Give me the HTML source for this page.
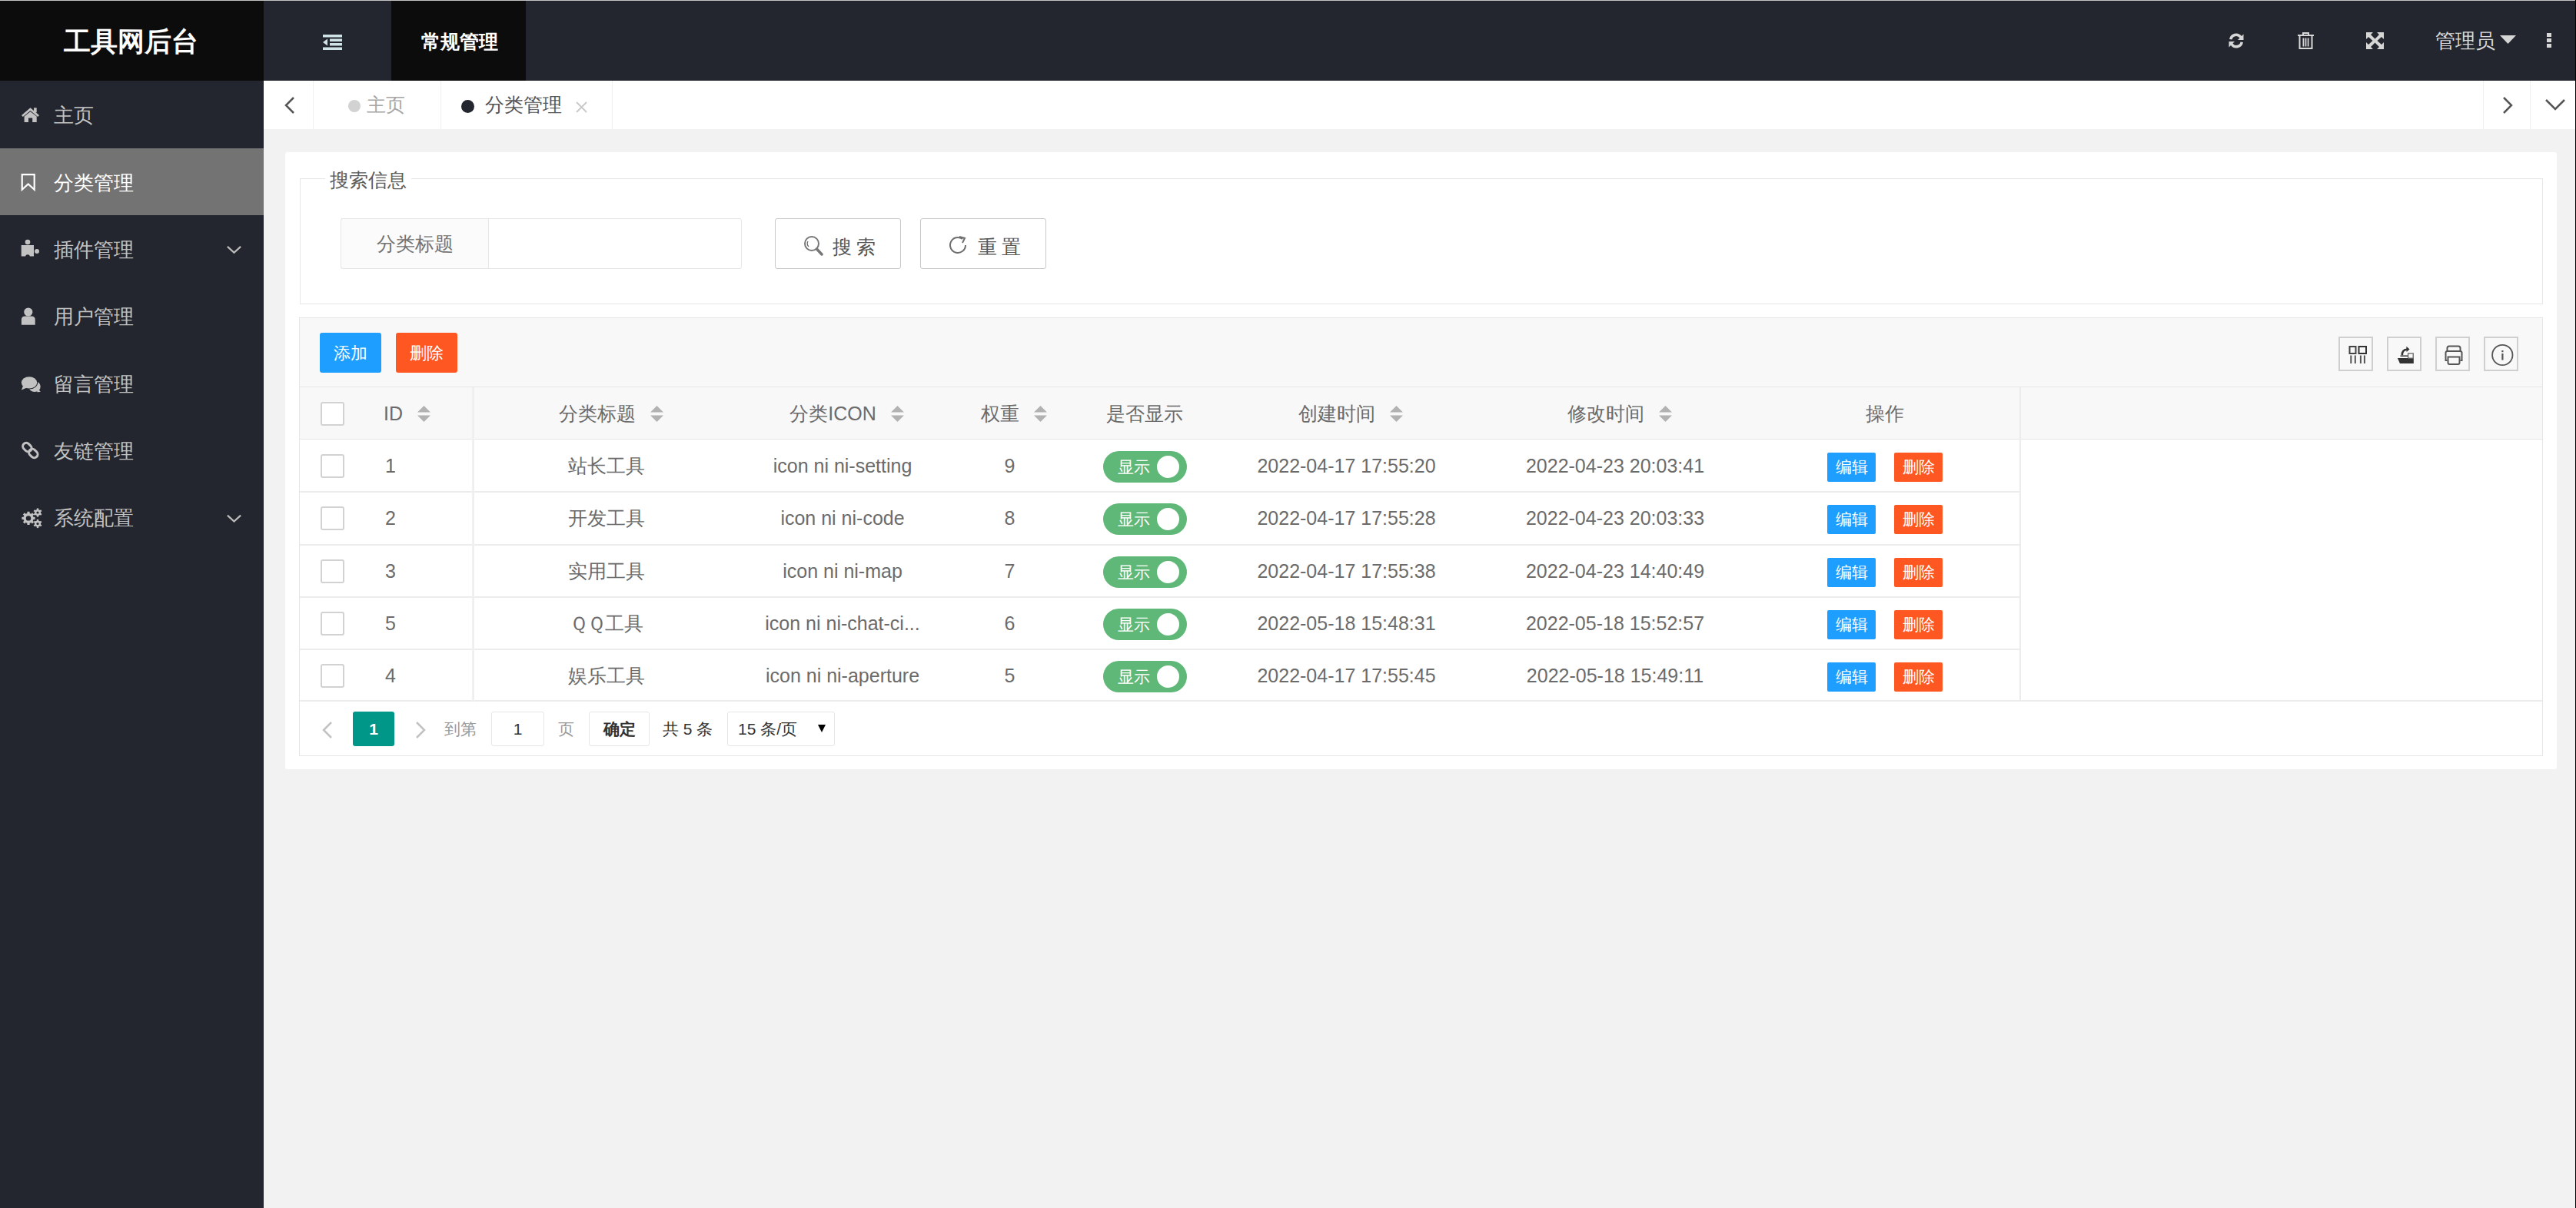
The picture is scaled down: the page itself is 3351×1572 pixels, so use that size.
<!DOCTYPE html>
<html><head><meta charset="utf-8">
<style>
*{margin:0;padding:0;box-sizing:border-box}
html,body{width:3351px;height:1572px;overflow:hidden;background:#f2f2f2;font-family:"Liberation Sans",sans-serif;color:#666}
.a{position:absolute}
svg{display:block}
/* header */
#topline{left:0;top:0;width:3351px;height:1px;background:#c4c4c4;z-index:5}
#logo{left:0;top:0;width:343px;height:105px;background:#0c0c0c;color:#fff;font-weight:bold;font-size:35px;line-height:108px;text-align:center;padding-right:3px}
#hdr{left:343px;top:0;width:3008px;height:105px;background:#23262e}
#rline{left:3350px;top:0;width:1px;height:1572px;background:#000;z-index:6}
.hact{left:509px;top:0;width:175px;height:105px;background:#0c0c0c;color:#fff;font-weight:bold;font-size:25px;line-height:109px;text-align:center;padding-left:3px}
.hw{color:#e6e6e6}
/* sidebar */
#side{left:0;top:105px;width:343px;height:1467px;background:#23262e}
.mi{left:0;width:343px;height:87px;color:#c2c2c2;font-size:26px;line-height:87px}
.mi .t{position:absolute;left:70px;top:2px}
.mi .ic{position:absolute;left:26px;top:33px}
.mi .ch{position:absolute;left:294px;top:38px}
.mi.on{background:#737373;color:#fff}
/* tabs */
#tabs{left:343px;top:105px;width:3008px;height:63px;background:#fff}
.vd{position:absolute;top:0;width:1px;height:63px;background:#f0f0f0}
.tt{position:absolute;top:0;height:63px;line-height:63px;font-size:25px}
/* card */
#card{left:371px;top:198px;width:2955px;height:803px;background:#fff;border-radius:3px}
#fs{left:390px;top:232px;width:2918px;height:164px;border:1px solid #e6e6e6}
#legend{left:423px;top:219px;padding:0 6px;background:#fff;font-size:25px;line-height:30px;color:#5c5c5c}
.lbl{left:443px;top:284px;width:193px;height:66px;background:#fbfbfb;border:1px solid #e6e6e6;border-right:none;border-radius:3px 0 0 3px;font-size:25px;line-height:64px;text-align:center;color:#737373}
.inp{left:635px;top:284px;width:330px;height:66px;border:1px solid #e6e6e6;border-radius:0 3px 3px 0}
.btn{top:284px;width:164px;height:66px;border:1px solid #c9c9c9;border-radius:3px;color:#555;font-size:25px;line-height:64px}
/* table */
#tv{left:389px;top:413px;width:2919px;height:571px;border:1px solid #e6e6e6}
#tool{left:390px;top:414px;width:2917px;height:90px;background:#f8f8f8;border-bottom:1px solid #e6e6e6}
.tb{top:433px;height:52px;width:80px;border-radius:3px;color:#fff;font-size:22px;line-height:54px;text-align:center}
.ib{top:438px;width:45px;height:45px;border:2px solid #cfcfcf}
#thead{left:390px;top:504px;width:2917px;height:68px;background:#f8f8f8;border-bottom:1px solid #e6e6e6}
.row{left:390px;width:2238px;height:69px;border-bottom:1px solid #e6e6e6}
.cell{position:absolute;top:0;height:68px;line-height:68px;font-size:25px;color:#666;text-align:center;white-space:nowrap}
.cb{position:absolute;left:27px;width:31px;height:31px;border:2px solid #d2d2d2;border-radius:3px;background:#fff}
.sw{position:absolute;width:109px;height:41px;border-radius:21px;background:#5FB878;color:#fff;font-size:21px;line-height:41px}
.sw i{position:absolute;right:10px;top:6px;width:29px;height:29px;border-radius:50%;background:#fff}
.sw span{position:absolute;left:19px;top:0}
.eb{position:absolute;width:63px;height:38px;border-radius:2px;color:#fff;font-size:21px;line-height:38px;text-align:center}
.sort{display:inline-block;vertical-align:middle;margin-left:18px;width:17px;height:30px;position:relative;top:-2px}

.th{height:68px;line-height:68px;font-size:25px;color:#6b6b6b;white-space:nowrap}
.td{height:68px;line-height:68px;font-size:25px;color:#6b6b6b;white-space:nowrap}
.srt{display:inline-block;width:25px;height:21px;position:relative;vertical-align:middle;top:-2px}
.srt svg{position:absolute;left:19px;top:0}
.hl{left:390px;width:2917px;height:2px;background:#ececec}
.vl{width:2px;background:#ececec}
/* pager */
.pg{top:926px;height:45px;line-height:45px;font-size:21px;color:#666}
</style></head><body>
<div class="a" id="topline"></div>
<div class="a" id="rline"></div>
<!-- header -->
<div class="a" id="logo">工具网后台</div>
<div class="a" id="hdr"></div>
<div class="a" style="left:420px;top:45px">
<svg width="25" height="20" viewBox="0 0 25 20"><rect x="0" y="0" width="25" height="3.5" fill="#cfe3e6"/><rect x="9" y="5.5" width="16" height="3.5" fill="#cfe3e6"/><rect x="9" y="11" width="16" height="3.5" fill="#cfe3e6"/><rect x="0" y="16.5" width="25" height="3.5" fill="#cfe3e6"/><path d="M6 5.5 L0 10 L6 14.5Z" fill="#cfe3e6"/></svg>
</div>
<div class="a hact">常规管理</div>
<!-- right header icons -->
<div class="a" style="left:2897px;top:42px">
<svg width="24" height="22" viewBox="0 0 24 22"><path d="M3 9 A9 9 0 0 1 19 5 L21.5 2.5 V10 H14 L16.5 7.5 A5.5 5.5 0 0 0 6.5 9.5Z" fill="#d6d6d6"/><path d="M21 13 A9 9 0 0 1 5 17 L2.5 19.5 V12 H10 L7.5 14.5 A5.5 5.5 0 0 0 17.5 12.5Z" fill="#d6d6d6"/></svg>
</div>
<div class="a" style="left:2989px;top:42px">
<svg width="21" height="22" viewBox="0 0 21 22"><path d="M7 3 V1 H14 V3" fill="none" stroke="#d6d6d6" stroke-width="2"/><rect x="0" y="3" width="21" height="2" fill="#d6d6d6"/><path d="M2.5 5 V21 H18.5 V5" fill="none" stroke="#d6d6d6" stroke-width="2"/><rect x="6.5" y="7.5" width="1.8" height="11" fill="#d6d6d6"/><rect x="9.6" y="7.5" width="1.8" height="11" fill="#d6d6d6"/><rect x="12.7" y="7.5" width="1.8" height="11" fill="#d6d6d6"/></svg>
</div>
<div class="a" style="left:3078px;top:42px">
<svg width="23" height="22" viewBox="0 0 23 22"><path d="M0 0 H9 L6 3 L11.5 8.5 L17 3 L14 0 H23 V9 L20 6 L14.5 11 L20 16 L23 13 V22 H14 L17 19 L11.5 13.5 L6 19 L9 22 H0 V13 L3 16 L8.5 11 L3 6 L0 9Z" fill="#d6d6d6"/></svg>
</div>
<div class="a hw" style="left:3168px;top:38px;font-size:26px;line-height:30px;color:#d9d9d9">管理员</div>
<div class="a" style="left:3252px;top:46px"><svg width="21" height="11" viewBox="0 0 21 11"><path d="M0 0 H21 L10.5 11Z" fill="#d6d6d6"/></svg></div>
<div class="a" style="left:3313px;top:43px"><svg width="6" height="19" viewBox="0 0 6 19"><rect x="0" y="0" width="6" height="5" fill="#d6d6d6"/><rect x="0" y="7" width="6" height="5" fill="#d6d6d6"/><rect x="0" y="14" width="6" height="5" fill="#d6d6d6"/></svg></div>

<!-- sidebar -->
<div class="a" id="side"></div>
<div class="a mi" style="top:105px"><span class="t">主页</span></div>
<div class="a mi on" style="top:193px"><span class="t">分类管理</span></div>
<div class="a mi" style="top:280px"><span class="t">插件管理</span></div>
<div class="a mi" style="top:367px"><span class="t">用户管理</span></div>
<div class="a mi" style="top:455px"><span class="t">留言管理</span></div>
<div class="a mi" style="top:542px"><span class="t">友链管理</span></div>
<div class="a mi" style="top:629px"><span class="t">系统配置</span></div>

<svg class="a" style="left:0;top:0;z-index:3" width="343" height="720" viewBox="0 0 343 720">
<path d="M28 150 L39.5 140.3 L51 150 L49.2 152 L39.5 144 L29.8 152Z" fill="#c2c2c2"/>
<rect x="44" y="140.3" width="3.7" height="6" fill="#c2c2c2"/>
<path d="M31.6 159 V151.5 L39.5 145.3 L47.7 151.5 V159 H42.2 V153.5 H37 V159Z" fill="#c2c2c2"/>
<path d="M28.7 227.1 H44.7 V246.7 L36.7 239.5 L28.7 246.7Z" fill="none" stroke="#fff" stroke-width="2.2" stroke-linejoin="miter"/>
<rect x="27.7" y="319" width="16.3" height="14.5" fill="#c2c2c2"/>
<circle cx="36" cy="315" r="3.3" fill="#c2c2c2"/>
<circle cx="48" cy="327" r="3" fill="#c2c2c2"/>
<circle cx="36" cy="334" r="2.8" fill="#23262e"/>
<circle cx="36.8" cy="406" r="5.6" fill="#c2c2c2"/>
<path d="M27.9 422.7 V416 Q27.9 411.5 32.4 411.5 H41.2 Q45.7 411.5 45.7 416 V422.7Z" fill="#c2c2c2"/>
<ellipse cx="45" cy="503" rx="7.7" ry="7" fill="#c2c2c2"/>
<path d="M48 510.2 L52.7 510 L50 506Z" fill="#c2c2c2"/>
<ellipse cx="38" cy="497.8" rx="11.2" ry="8.6" fill="#23262e"/>
<ellipse cx="38" cy="497.8" rx="10.2" ry="7.6" fill="#c2c2c2"/>
<path d="M30 502 L27.9 507.5 L35 504.5Z" fill="#c2c2c2"/>
<g transform="rotate(45 39.3 586)"><rect x="27.5" y="581.5" width="12.5" height="9" rx="4.5" fill="none" stroke="#c2c2c2" stroke-width="3"/><rect x="38.7" y="581.5" width="12.5" height="9" rx="4.5" fill="none" stroke="#c2c2c2" stroke-width="3"/></g>
<circle cx="37" cy="674.4" r="6.6" fill="#c2c2c2"/><rect x="35.4" y="665.8" width="3.2" height="17.2" fill="#c2c2c2" transform="rotate(0.0 37 674.4)"/><rect x="35.4" y="665.8" width="3.2" height="17.2" fill="#c2c2c2" transform="rotate(45.0 37 674.4)"/><rect x="35.4" y="665.8" width="3.2" height="17.2" fill="#c2c2c2" transform="rotate(90.0 37 674.4)"/><rect x="35.4" y="665.8" width="3.2" height="17.2" fill="#c2c2c2" transform="rotate(135.0 37 674.4)"/><circle cx="37" cy="674.4" r="3.2" fill="#23262e"/>
<circle cx="49" cy="667" r="4.0" fill="#c2c2c2"/><rect x="47.8" y="661.4" width="2.4" height="11.2" fill="#c2c2c2" transform="rotate(0.0 49 667)"/><rect x="47.8" y="661.4" width="2.4" height="11.2" fill="#c2c2c2" transform="rotate(60.0 49 667)"/><rect x="47.8" y="661.4" width="2.4" height="11.2" fill="#c2c2c2" transform="rotate(120.0 49 667)"/><circle cx="49" cy="667" r="1.6" fill="#23262e"/>
<circle cx="49" cy="681.5" r="4.0" fill="#c2c2c2"/><rect x="47.8" y="675.9" width="2.4" height="11.2" fill="#c2c2c2" transform="rotate(0.0 49 681.5)"/><rect x="47.8" y="675.9" width="2.4" height="11.2" fill="#c2c2c2" transform="rotate(60.0 49 681.5)"/><rect x="47.8" y="675.9" width="2.4" height="11.2" fill="#c2c2c2" transform="rotate(120.0 49 681.5)"/><circle cx="49" cy="681.5" r="1.6" fill="#23262e"/>
<path d="M295.9 320.9 L304.5 328.8 L313.1 320.9" fill="none" stroke="#bdbdbd" stroke-width="2.2"/>
<path d="M295.9 670.6 L304.5 678.5 L313.1 670.6" fill="none" stroke="#bdbdbd" stroke-width="2.2"/>
</svg>
<!-- tabs -->
<div class="a" id="tabs">
 <div class="vd" style="left:64px"></div>
 <div class="vd" style="left:230px"></div>
 <div class="vd" style="left:453px"></div>
 <div class="vd" style="left:2887px"></div>
 <div class="vd" style="left:2948px"></div>
 <div class="a" style="left:27px;top:21px"><svg width="14" height="22" viewBox="0 0 14 22"><path d="M12 1 L2 11 L12 21" fill="none" stroke="#555" stroke-width="2.5"/></svg></div>
 <div class="a" style="left:110px;top:25px;width:16px;height:16px;border-radius:50%;background:#d2d2d2"></div>
 <div class="tt" style="left:134px;color:#a6a6a6">主页</div>
 <div class="a" style="left:257px;top:25px;width:17px;height:17px;border-radius:50%;background:#23262e"></div>
 <div class="tt" style="left:288px;color:#555">分类管理</div>
 <div class="a" style="left:406px;top:27px"><svg width="15" height="15" viewBox="0 0 15 15"><path d="M1 1 L14 14 M14 1 L1 14" stroke="#c8c8c8" stroke-width="1.8"/></svg></div>
 <div class="a" style="left:2912px;top:21px"><svg width="14" height="22" viewBox="0 0 14 22"><path d="M2 1 L12 11 L2 21" fill="none" stroke="#555" stroke-width="2.5"/></svg></div>
 <div class="a" style="left:2968px;top:24px"><svg width="26" height="15" viewBox="0 0 26 15"><path d="M1 1 L13 13 L25 1" fill="none" stroke="#555" stroke-width="2.5"/></svg></div>
</div>

<!-- card -->
<div class="a" id="card"></div>
<div class="a" id="fs"></div>
<div class="a" id="legend">搜索信息</div>
<div class="a lbl">分类标题</div>
<div class="a inp"></div>
<div class="a btn" style="left:1008px"><span class="a" style="left:36px;top:21px"><svg width="26" height="28" viewBox="0 0 26 28"><circle cx="11" cy="11" r="9" fill="none" stroke="#777" stroke-width="2"/><path d="M17.5 18 L24 25" stroke="#777" stroke-width="3.5" stroke-linecap="round"/><path d="M6 8 A6 6 0 0 0 7 15" fill="none" stroke="#666" stroke-width="1.2"/></svg></span><span class="a" style="left:74px;top:4px;letter-spacing:6px">搜索</span></div>
<div class="a btn" style="left:1197px"><span class="a" style="left:36px;top:20px"><svg width="26" height="28" viewBox="0 0 26 28"><path d="M22 14 A10 10 0 1 1 18 6" fill="none" stroke="#6e6e6e" stroke-width="2"/><path d="M14 3 L21 5 L18 11" fill="none" stroke="#6e6e6e" stroke-width="2"/></svg></span><span class="a" style="left:74px;top:4px;letter-spacing:6px">重置</span></div>

<!-- table -->
<div class="a" id="tv"></div>
<div class="a" id="tool"></div>
<div class="a tb" style="left:416px;background:#1E9FFF">添加</div>
<div class="a tb" style="left:515px;background:#FF5722">删除</div>
<div class="a ib" style="left:3042px"></div>
<div class="a ib" style="left:3105px"></div>
<div class="a ib" style="left:3168px"></div>
<div class="a ib" style="left:3231px"></div>
<div class="a" id="thead"></div>
<div class="a" style="left:3042px;top:438px"><svg width="45" height="45" viewBox="0 0 45 45"><rect x="14.5" y="13" width="8" height="9" fill="none" stroke="#444" stroke-width="2"/><rect x="26.5" y="13" width="9.5" height="9" fill="none" stroke="#333" stroke-width="2"/><rect x="15.3" y="24.5" width="2" height="10.5" fill="#555"/><rect x="20.8" y="24.5" width="2" height="10.5" fill="#555"/><rect x="27.9" y="24.5" width="2" height="10.5" fill="#555"/><rect x="32.9" y="24.5" width="2" height="10.5" fill="#555"/></svg></div>
<div class="a" style="left:3105px;top:438px"><svg width="45" height="45" viewBox="0 0 45 45"><path d="M13.9 28 H34.8 V35.1 H16.9Z" fill="#333"/><rect x="17.5" y="24.4" width="10.5" height="1.6" fill="#444"/><rect x="27.6" y="21.9" width="6.6" height="6.3" fill="none" stroke="#666" stroke-width="1.3"/><path d="M19.8 24.3 Q19.5 17.5 26 16.8" fill="none" stroke="#333" stroke-width="2.6"/><path d="M25.3 12.8 L29.6 16.6 L25.6 20Z" fill="#333"/></svg></div>
<div class="a" style="left:3168px;top:438px"><svg width="45" height="45" viewBox="0 0 45 45"><path d="M15.5 19 V15 Q15.5 12.5 18 12.5 H30 Q32.5 12.5 32.5 15 V19" fill="none" stroke="#555" stroke-width="2"/><path d="M15.5 31 H13.5 V21 Q13.5 19 16 19 H32 Q34.5 19 34.5 21 V31 H32.5" fill="none" stroke="#555" stroke-width="2"/><path d="M16.5 26.5 H31.5 V34 Q31.5 36 29.5 36 H18.5 Q16.5 36 16.5 34Z" fill="none" stroke="#555" stroke-width="2"/></svg></div>
<div class="a" style="left:3231px;top:438px"><svg width="45" height="45" viewBox="0 0 45 45"><circle cx="24.3" cy="24" r="13.2" fill="none" stroke="#555" stroke-width="1.8"/><rect x="23.3" y="18" width="2.2" height="2.2" fill="#555"/><rect x="23.3" y="22" width="2.2" height="8.5" fill="#555"/></svg></div>

<div class="a cb" style="left:417px;top:523px"></div>
<div class="a th" style="left:499px;top:504px">ID<span class="srt"><svg width="17" height="21" viewBox="0 0 17 21"><path d="M8.5 0 L17 8.5 H0Z M0 12.5 H17 L8.5 21Z" fill="#b2b2b2"/></svg></span></div>
<div class="a th" style="left:614px;top:504px;width:350px;text-align:center">分类标题<span class="srt"><svg width="17" height="21" viewBox="0 0 17 21"><path d="M8.5 0 L17 8.5 H0Z M0 12.5 H17 L8.5 21Z" fill="#b2b2b2"/></svg></span></div>
<div class="a th" style="left:964px;top:504px;width:264px;text-align:center">分类ICON<span class="srt"><svg width="17" height="21" viewBox="0 0 17 21"><path d="M8.5 0 L17 8.5 H0Z M0 12.5 H17 L8.5 21Z" fill="#b2b2b2"/></svg></span></div>
<div class="a th" style="left:1228px;top:504px;width:171px;text-align:center">权重<span class="srt"><svg width="17" height="21" viewBox="0 0 17 21"><path d="M8.5 0 L17 8.5 H0Z M0 12.5 H17 L8.5 21Z" fill="#b2b2b2"/></svg></span></div>
<div class="a th" style="left:1401px;top:504px;width:176px;text-align:center">是否显示</div>
<div class="a th" style="left:1577px;top:504px;width:349px;text-align:center">创建时间<span class="srt"><svg width="17" height="21" viewBox="0 0 17 21"><path d="M8.5 0 L17 8.5 H0Z M0 12.5 H17 L8.5 21Z" fill="#b2b2b2"/></svg></span></div>
<div class="a th" style="left:1926px;top:504px;width:350px;text-align:center">修改时间<span class="srt"><svg width="17" height="21" viewBox="0 0 17 21"><path d="M8.5 0 L17 8.5 H0Z M0 12.5 H17 L8.5 21Z" fill="#b2b2b2"/></svg></span></div>
<div class="a th" style="left:2276px;top:504px;width:352px;text-align:center">操作</div>
<div class="a cb" style="left:417px;top:591px"></div>
<div class="a td" style="left:501px;top:572px">1</div>
<div class="a td" style="left:614px;top:572px;width:350px;text-align:center">站长工具</div>
<div class="a td" style="left:964px;top:572px;width:264px;text-align:center">icon ni ni-setting</div>
<div class="a td" style="left:1228px;top:572px;width:171px;text-align:center">9</div>
<div class="a sw" style="left:1435px;top:587px"><span>显示</span><i></i></div>
<div class="a td" style="left:1577px;top:572px;width:349px;text-align:center">2022-04-17 17:55:20</div>
<div class="a td" style="left:1926px;top:572px;width:350px;text-align:center">2022-04-23 20:03:41</div>
<div class="a eb" style="left:2377px;top:589px;background:#1E9FFF">编辑</div>
<div class="a eb" style="left:2464px;top:589px;background:#FF5722">删除</div>
<div class="a cb" style="left:417px;top:659px"></div>
<div class="a td" style="left:501px;top:640px">2</div>
<div class="a td" style="left:614px;top:640px;width:350px;text-align:center">开发工具</div>
<div class="a td" style="left:964px;top:640px;width:264px;text-align:center">icon ni ni-code</div>
<div class="a td" style="left:1228px;top:640px;width:171px;text-align:center">8</div>
<div class="a sw" style="left:1435px;top:655px"><span>显示</span><i></i></div>
<div class="a td" style="left:1577px;top:640px;width:349px;text-align:center">2022-04-17 17:55:28</div>
<div class="a td" style="left:1926px;top:640px;width:350px;text-align:center">2022-04-23 20:03:33</div>
<div class="a eb" style="left:2377px;top:657px;background:#1E9FFF">编辑</div>
<div class="a eb" style="left:2464px;top:657px;background:#FF5722">删除</div>
<div class="a cb" style="left:417px;top:728px"></div>
<div class="a td" style="left:501px;top:709px">3</div>
<div class="a td" style="left:614px;top:709px;width:350px;text-align:center">实用工具</div>
<div class="a td" style="left:964px;top:709px;width:264px;text-align:center">icon ni ni-map</div>
<div class="a td" style="left:1228px;top:709px;width:171px;text-align:center">7</div>
<div class="a sw" style="left:1435px;top:724px"><span>显示</span><i></i></div>
<div class="a td" style="left:1577px;top:709px;width:349px;text-align:center">2022-04-17 17:55:38</div>
<div class="a td" style="left:1926px;top:709px;width:350px;text-align:center">2022-04-23 14:40:49</div>
<div class="a eb" style="left:2377px;top:726px;background:#1E9FFF">编辑</div>
<div class="a eb" style="left:2464px;top:726px;background:#FF5722">删除</div>
<div class="a cb" style="left:417px;top:796px"></div>
<div class="a td" style="left:501px;top:777px">5</div>
<div class="a td" style="left:614px;top:777px;width:350px;text-align:center">ＱＱ工具</div>
<div class="a td" style="left:964px;top:777px;width:264px;text-align:center">icon ni ni-chat-ci...</div>
<div class="a td" style="left:1228px;top:777px;width:171px;text-align:center">6</div>
<div class="a sw" style="left:1435px;top:792px"><span>显示</span><i></i></div>
<div class="a td" style="left:1577px;top:777px;width:349px;text-align:center">2022-05-18 15:48:31</div>
<div class="a td" style="left:1926px;top:777px;width:350px;text-align:center">2022-05-18 15:52:57</div>
<div class="a eb" style="left:2377px;top:794px;background:#1E9FFF">编辑</div>
<div class="a eb" style="left:2464px;top:794px;background:#FF5722">删除</div>
<div class="a cb" style="left:417px;top:864px"></div>
<div class="a td" style="left:501px;top:845px">4</div>
<div class="a td" style="left:614px;top:845px;width:350px;text-align:center">娱乐工具</div>
<div class="a td" style="left:964px;top:845px;width:264px;text-align:center">icon ni ni-aperture</div>
<div class="a td" style="left:1228px;top:845px;width:171px;text-align:center">5</div>
<div class="a sw" style="left:1435px;top:860px"><span>显示</span><i></i></div>
<div class="a td" style="left:1577px;top:845px;width:349px;text-align:center">2022-04-17 17:55:45</div>
<div class="a td" style="left:1926px;top:845px;width:350px;text-align:center">2022-05-18 15:49:11</div>
<div class="a eb" style="left:2377px;top:862px;background:#1E9FFF">编辑</div>
<div class="a eb" style="left:2464px;top:862px;background:#FF5722">删除</div>
<div class="a hl" style="top:639px;width:2238px"></div>
<div class="a hl" style="top:708px;width:2238px"></div>
<div class="a hl" style="top:776px;width:2238px"></div>
<div class="a hl" style="top:844px;width:2238px"></div>
<div class="a hl" style="top:911px"></div>

<div class="a vl" style="left:2627px;top:504px;height:409px"></div>
<div class="a" style="left:614px;top:504px;width:3px;height:409px;background:linear-gradient(90deg,#f4f4f4,#ececec 50%,#f6f6f6)"></div>
<!-- pager -->
<div class="a" style="left:419px;top:939px"><svg width="14" height="22" viewBox="0 0 14 22"><path d="M12 1 L2 11 L12 21" fill="none" stroke="#c2c2c2" stroke-width="2.5"/></svg></div>
<div class="a pg" style="left:459px;width:54px;background:#009688;color:#fff;border-radius:3px;text-align:center;font-weight:bold">1</div>
<div class="a" style="left:540px;top:939px"><svg width="14" height="22" viewBox="0 0 14 22"><path d="M2 1 L12 11 L2 21" fill="none" stroke="#c2c2c2" stroke-width="2.5"/></svg></div>
<div class="a pg" style="left:578px;color:#999">到第</div>
<div class="a pg" style="left:639px;width:69px;border:1px solid #e6e6e6;border-radius:3px;text-align:center;line-height:43px;color:#333">1</div>
<div class="a pg" style="left:726px;color:#999">页</div>
<div class="a pg" style="left:766px;width:79px;border:1px solid #e6e6e6;border-radius:3px;text-align:center;line-height:43px;color:#333;font-weight:bold">确定</div>
<div class="a pg" style="left:862px;color:#333">共 5 条</div>
<div class="a pg" style="left:946px;width:140px;border:1px solid #e6e6e6;border-radius:3px;line-height:43px;color:#333;padding-left:13px">15 条/页</div>
<div class="a" style="left:1064px;top:942px"><svg width="10" height="12" viewBox="0 0 10 12"><path d="M0 1 H10 L5 11Z" fill="#000"/></svg></div>
</body></html>
